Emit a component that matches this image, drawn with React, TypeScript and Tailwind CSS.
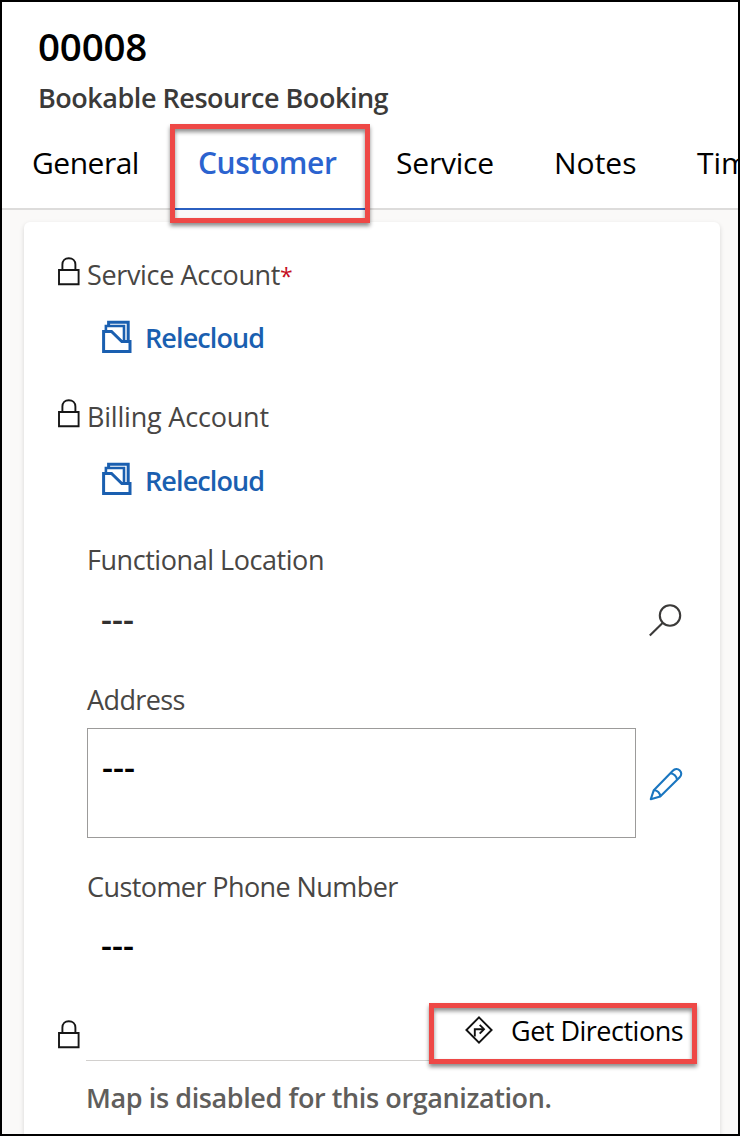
import type { ReactNode } from "react";

function LockIcon() {
  return (
    <svg className="block h-[29px] w-[22px] shrink-0" viewBox="0 0 22 29" fill="none" stroke="#161616" strokeWidth="1.9">
      <path d="M1 13H20.6V27.2H1Z" />
      <path d="M4.4 13V7.6C4.4 3.6 7 1.2 10.8 1.2S17.4 3.6 17.4 7.6V13" />
    </svg>
  );
}

function AccountIcon() {
  return (
    <svg className="block h-[34px] w-[30px] shrink-0" viewBox="0 0 30 34" fill="none" stroke="#1a5fb0" strokeWidth="3">
      <path d="M1.6 11.5H9.5L19.8 21.5H28V31.5H1.6Z" />
      <path d="M3.9 11V6H22V21.5" strokeWidth="2.6" />
      <path d="M6.6 5.5V2.3H26.2V21.5" strokeWidth="3" />
    </svg>
  );
}

function SearchIcon() {
  return (
    <svg className="block size-[34px] shrink-0" viewBox="0 0 34 34" fill="none" stroke="#3b3a39" strokeWidth="2.1">
      <circle cx="22" cy="12.5" r="10.2" />
      <path d="M14.8 19.8L1.8 32.6" />
    </svg>
  );
}

function PencilIcon() {
  return (
    <svg className="block size-[34px] shrink-0" viewBox="0 0 34 34" fill="none" stroke="#1a76c0" strokeWidth="2.1" strokeLinejoin="round">
      <path d="M1.8 32.2L4.8 23.2L23.8 3.7C25.8 1.6 28.8 1.5 30.8 3.4C32.8 5.4 32.7 8.3 30.7 10.3L11.2 29.4Z" />
      <path d="M4.8 23.2C8.3 23.2 11.2 25.8 11.2 29.4" />
      <path d="M21.4 6.2C24.6 6.4 27.8 9.4 28 12.8" />
    </svg>
  );
}

function DirectionsIcon() {
  return (
    <svg className="block size-[28px] shrink-0" viewBox="0 0 28 28" fill="none" stroke="#111" strokeWidth="1.9">
      <path d="M14 1.4L26.6 14L14 26.6L1.4 14Z" />
      <path d="M9.8 20.5V13.2H18.6" />
      <path d="M14.7 8.8L19 13.2L14.7 17.6" />
    </svg>
  );
}

function Label({ locked, className, children }: { locked?: boolean; className: string; children: ReactNode }) {
  return (
    <div className={`flex items-center ${className}`}>
      <span className="w-[29px] shrink-0 pb-[7px]">{locked && <LockIcon />}</span>
      <span className="whitespace-nowrap pt-[2px] text-[27px] text-[#484644]">{children}</span>
    </div>
  );
}

function AccountLink({ className }: { className: string }) {
  return (
    <div className={`flex items-center pl-[44px] ${className}`}>
      <span className="pb-[2px]">
        <AccountIcon />
      </span>
      <span className="ml-[13px] pt-[2px] text-[27px] font-semibold tracking-[-0.9px] text-[#1a5fb0]">Relecloud</span>
    </div>
  );
}

export default function App() {
  return (
    <div className="flex h-[1136px] w-[740px] flex-col overflow-hidden border-2 border-black bg-white font-['Open_Sans',sans-serif] text-black">
      <header className="h-[115px] shrink-0 pl-[36px] pt-[18px]">
        <h1 className="text-[38.5px] font-semibold leading-[52px] tracking-[-0.2px]">00008</h1>
        <p className="mt-[7px] text-[27px] font-semibold leading-[37px] tracking-[-0.47px] text-[#3b3a39]">Bookable Resource Booking</p>
      </header>

      <nav className="flex h-[93px] shrink-0 border-b-2 border-[#dddcdb] pt-[26px] text-[30px] leading-[40px]">
        <span className="ml-[30px] w-[140px] shrink-0 tracking-[-0.5px]">General</span>
        <span className="relative -mt-[26px] h-[93px] w-[194px] shrink-0 border-b-2 border-[#2b5fc0] pl-[26px] pt-[26px] font-semibold tracking-[-0.4px] text-[#2b63cf]">
          Customer
          <span className="pointer-events-none absolute -left-[2px] top-[7px] z-10 h-[99px] w-[200px] border-5 border-[#ee4846] shadow-[0_3px_4px_rgba(0,0,0,0.45),inset_0_3px_4px_rgba(0,0,0,0.45)]" />
        </span>
        <span className="ml-[30px] w-[158px] shrink-0 tracking-[-0.2px]">Service</span>
        <span className="w-[143px] shrink-0">Notes</span>
        <span className="shrink-0">Timeline</span>
      </nav>

      <main className="flex min-h-0 flex-1 flex-col bg-[#faf9f8] pl-[22px] pr-[18px] pt-[12px]">
        <section className="flex-1 rounded-t-[6px] bg-white pl-[34px] pt-[32px] shadow-[0_2px_5px_rgba(0,0,0,0.14)]">
          <Label locked className="h-[41px]">
            <span className="tracking-[-0.35px]">Service Account</span>
            <span className="text-[23px] text-[#c50f1f]">*</span>
          </Label>
          <AccountLink className="h-[85px]" />
          <Label locked className="h-[73px] tracking-[-0.2px]">
            Billing Account
          </Label>
          <AccountLink className="h-[54px]" />

          <Label className="mt-[16px] h-[73px] tracking-[-0.45px]">Functional Location</Label>
          <div className="flex h-[48px] items-center justify-between pl-[43px] pr-[38px]">
            <span className="pb-[2px] text-[34px] font-semibold leading-[40px] text-[#323130]">---</span>
            <SearchIcon />
          </div>

          <Label className="mt-[26px] h-[58px] tracking-[-0.6px]">Address</Label>
          <div className="flex h-[110px] items-center justify-between pl-[29px] pr-[37px]">
            <div className="h-full w-[549px] border border-[#9c9b9a] pl-[14px] pt-[18px] text-[34px] font-semibold leading-[40px]">---</div>
            <span className="pt-[2px]">
              <PencilIcon />
            </span>
          </div>

          <Label className="mt-[28px] h-[41px] tracking-[-0.58px]">Customer Phone Number</Label>
          <div className="flex h-[73px] items-center pl-[43px] pt-[4px] text-[34px] font-semibold">---</div>

          <div className="flex h-[81px]">
            <span className="w-[28px] shrink-0 pt-[40px]">
              <LockIcon />
            </span>
            <div className="mr-[34px] flex flex-1 justify-end border-b border-[#d2d0ce]">
              <button className="relative -mr-[11px] mt-[23px] flex h-[61px] w-[268px] items-start border-5 border-[#ee4846] bg-white pl-[31px] pt-[8px] shadow-[0_3px_4px_rgba(0,0,0,0.45),inset_0_3px_4px_rgba(0,0,0,0.45)]">
                <DirectionsIcon />
                <span className="ml-[18px] mt-px whitespace-nowrap text-[27px] leading-[27px] tracking-[-0.5px]">Get Directions</span>
              </button>
            </div>
          </div>
          <p className="flex h-[73px] items-center whitespace-nowrap pl-[28px] pt-[2px] text-[27px] font-semibold tracking-[-0.4px] text-[#605e5c]">
            Map is disabled for this organization.
          </p>
        </section>
      </main>
    </div>
  );
}
